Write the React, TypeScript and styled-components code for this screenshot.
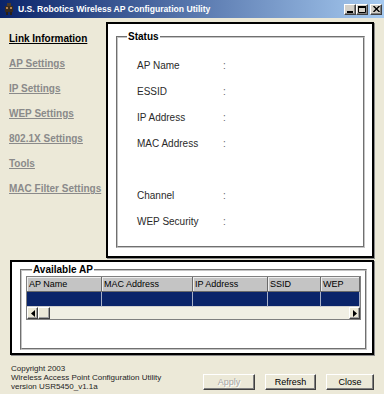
import styled, { createGlobalStyle } from 'styled-components';

const GlobalStyle = createGlobalStyle`
  html, body {
    margin: 0;
    padding: 0;
    background: #ece9d8;
  }
  body {
    font-family: "Liberation Sans", Arial, sans-serif;
  }
`;

const StyledWindow = styled.div`
  width: 384px;
  height: 394px;
  display: flex;
  flex-direction: column;
  background: #ece9d8;
  overflow: hidden;
`;
const StyledTitleBar = styled.div`
  height: 18px;
  flex-shrink: 0;
  display: flex;
  align-items: center;
  padding: 0 2px 0 4px;
  background: linear-gradient(to right, #0a246a, #a6caf0);
`;
const StyledTitleText = styled.div`
  flex: 1;
  margin-left: 4px;
  color: #fff;
  font-weight: bold;
  font-size: 8.6px;
  white-space: nowrap;
`;
const StyledTitleButtons = styled.div`
  display: flex;
`;
const StyledTitleButton = styled.div<{ $gap?: boolean }>`
  width: 12px;
  height: 11px;
  box-sizing: border-box;
  margin-left: ${(p) => (p.$gap ? '2px' : '0')};
  background: #d4d0c8;
  border: 1px solid;
  border-color: #fff #404040 #404040 #fff;
  box-shadow: inset -1px -1px 0 #808080;
  display: flex;
  align-items: center;
  justify-content: center;
`;
const StyledBody = styled.div`
  flex: 1;
  display: flex;
  flex-direction: column;
  padding-top: 4px;
`;
const StyledTopRow = styled.div`
  display: flex;
  height: 236px;
`;
const StyledNav = styled.nav`
  width: 106px;
  box-sizing: border-box;
  padding: 11px 0 0 9px;
  display: flex;
  flex-direction: column;
  gap: 13px;
`;
const StyledNavLink = styled.a<{ $active?: boolean }>`
  font-weight: bold;
  font-size: 10px;
  line-height: 12px;
  color: ${(p) => (p.$active ? '#000' : '#8a8a8a')};
  text-decoration: underline;
  white-space: nowrap;
  cursor: pointer;
`;
const StyledPanel = styled.div`
  background: #fff;
  box-sizing: border-box;
  border: 2px solid #000;
  box-shadow: 1px 1px 0 #8a8a8a;
  display: flex;
  flex-direction: column;
`;
const StyledMainPanel = styled(StyledPanel)`
  width: 268px;
  height: 236px;
  padding: 7px 7px 8px 8px;
`;
const StyledGroup = styled.fieldset`
  flex: 1;
  min-width: 0;
  margin: 0;
  padding: 0;
  border: 2px groove #c4c4c4;
  display: flex;
  flex-direction: column;
`;
const StyledLegend = styled.legend<{ $offset: number }>`
  margin-left: ${(p) => p.$offset}px;
  padding: 0 1px;
  font-weight: bold;
  font-size: 10px;
  line-height: 12px;
  color: #000;
`;
const StyledStatusList = styled.div`
  padding: 9px 0 0 19px;
`;
const StyledStatusRow = styled.div<{ $gap?: boolean }>`
  display: grid;
  grid-template-columns: 86px auto;
  align-items: center;
  height: 26px;
  margin-top: ${(p) => (p.$gap ? '26px' : '0')};
  font-size: 10px;
  color: #2a2a2a;
`;
const StyledColon = styled.span`
  color: #666;
`;
const StyledBottomPanel = styled(StyledPanel)`
  margin: 2px 0 0 10px;
  width: 364px;
  height: 95px;
  padding: 2px 5px 3px 8px;
`;
const StyledListView = styled.div`
  flex: 1;
  margin: 0 4px 1px 4px;
  border: 1px solid #808080;
  display: flex;
  flex-direction: column;
  background: #fff;
`;
const StyledGridRow = styled.div`
  display: grid;
  grid-template-columns: 75px 91px 75px 53px 39px;
  height: 15px;
`;
const StyledHeaderCell = styled.div`
  box-sizing: border-box;
  background: #c4c4c4;
  border-right: 1px solid #6a6a6a;
  border-bottom: 1px solid #6a6a6a;
  box-shadow: inset 1px 1px 0 #eeeeee;
  font-size: 9px;
  line-height: 14px;
  padding-left: 2px;
  color: #000;
  white-space: nowrap;
  overflow: hidden;
`;
const StyledSelectedCell = styled.div`
  box-sizing: border-box;
  background: #0a246a;
  border-right: 1px solid #a8b0c8;
  border-bottom: 1px solid #d0d0d0;
`;
const StyledListSpace = styled.div`
  flex: 1;
`;
const StyledScrollBar = styled.div`
  height: 12px;
  display: flex;
  background: #f1efe4;
`;
const StyledScrollButton = styled.div<{ $width?: number }>`
  width: ${(p) => p.$width || 11}px;
  box-sizing: border-box;
  background: #ece9d8;
  border: 1px solid;
  border-color: #fff #404040 #404040 #fff;
  box-shadow: inset -1px -1px 0 #a0a0a0;
  display: flex;
  align-items: center;
  justify-content: center;
`;
const StyledScrollTrack = styled.div`
  flex: 1;
`;
const StyledFooter = styled.div`
  flex: 1;
  display: flex;
  justify-content: space-between;
  padding: 0 10px 0 11px;
`;
const StyledCopyright = styled.div`
  padding-top: 9px;
  font-size: 8px;
  line-height: 9px;
  color: #1e1e1e;
`;
const StyledButtons = styled.div`
  display: flex;
  gap: 10px;
  padding-top: 19px;
`;
const StyledButton = styled.button<{ $width: number }>`
  width: ${(p) => p.$width}px;
  height: 16px;
  padding: 0;
  box-sizing: border-box;
  background: #ece9d8;
  border: 1px solid;
  border-color: #fff #404040 #404040 #fff;
  box-shadow: inset -1px -1px 0 #808080;
  font-family: "Liberation Sans", Arial, sans-serif;
  font-size: 9px;
  color: #000;
  &:disabled {
    color: #a6a6a6;
    text-shadow: 1px 1px 0 #fff;
  }
`;

const navItems = [
  'Link Information',
  'AP Settings',
  'IP Settings',
  'WEP Settings',
  '802.1X Settings',
  'Tools',
  'MAC Filter Settings',
];

const statusItems = [
  { label: 'AP Name' },
  { label: 'ESSID' },
  { label: 'IP Address' },
  { label: 'MAC Address' },
  { label: 'Channel', gap: true },
  { label: 'WEP Security' },
];

const columns = ['AP Name', 'MAC Address', 'IP Address', 'SSID', 'WEP'];

const AppIcon = () => (
  <svg width="10" height="12" viewBox="0 0 10 12">
    <rect x="3" y="0" width="4" height="3" fill="#4a3a2a" />
    <rect x="1" y="3" width="8" height="6" fill="#3a2c1e" />
    <rect x="2" y="4" width="2" height="2" fill="#b08050" />
    <rect x="6" y="4" width="2" height="2" fill="#b08050" />
    <rect x="2" y="9" width="2" height="3" fill="#2a2016" />
    <rect x="6" y="9" width="2" height="3" fill="#2a2016" />
  </svg>
);

const Arrow = ({ dir }: { dir: 'left' | 'right' }) => (
  <svg width="4" height="7" viewBox="0 0 4 7">
    <path d={dir === 'left' ? 'M4 0 L0 3.5 L4 7 Z' : 'M0 0 L4 3.5 L0 7 Z'} fill="#000" />
  </svg>
);

const App = () => {
  return (
    <StyledWindow>
      <GlobalStyle />
      <StyledTitleBar>
        <AppIcon />
        <StyledTitleText>U.S. Robotics Wireless AP Configuration Utility</StyledTitleText>
        <StyledTitleButtons>
          <StyledTitleButton>
            <svg width="6" height="7" viewBox="0 0 6 7">
              <rect x="0" y="5" width="6" height="2" fill="#000" />
            </svg>
          </StyledTitleButton>
          <StyledTitleButton>
            <svg width="8" height="7" viewBox="0 0 8 7">
              <path d="M0.5 1.5 H7.5 V6.5 H0.5 Z" fill="none" stroke="#000" />
              <rect x="0" y="0" width="8" height="2" fill="#000" />
            </svg>
          </StyledTitleButton>
          <StyledTitleButton $gap>
            <svg width="7" height="6" viewBox="0 0 7 6">
              <path d="M0.5 0 L6.5 6 M6.5 0 L0.5 6" stroke="#000" strokeWidth="1.4" />
            </svg>
          </StyledTitleButton>
        </StyledTitleButtons>
      </StyledTitleBar>

      <StyledBody>
        <StyledTopRow>
          <StyledNav>
            {navItems.map((item, i) => (
              <StyledNavLink key={item} $active={i === 0}>{item}</StyledNavLink>
            ))}
          </StyledNav>
          <StyledMainPanel>
            <StyledGroup>
              <StyledLegend $offset={9}>Status</StyledLegend>
              <StyledStatusList>
                {statusItems.map((s) => (
                  <StyledStatusRow key={s.label} $gap={s.gap}>
                    <span>{s.label}</span>
                    <StyledColon>:</StyledColon>
                  </StyledStatusRow>
                ))}
              </StyledStatusList>
            </StyledGroup>
          </StyledMainPanel>
        </StyledTopRow>

        <StyledBottomPanel>
          <StyledGroup>
            <StyledLegend $offset={10}>Available AP</StyledLegend>
            <StyledListView>
              <StyledGridRow>
                {columns.map((c) => (
                  <StyledHeaderCell key={c}>{c}</StyledHeaderCell>
                ))}
              </StyledGridRow>
              <StyledGridRow>
                {columns.map((c) => (
                  <StyledSelectedCell key={c} />
                ))}
              </StyledGridRow>
              <StyledListSpace />
              <StyledScrollBar>
                <StyledScrollButton><Arrow dir="left" /></StyledScrollButton>
                <StyledScrollButton $width={12} />
                <StyledScrollTrack />
                <StyledScrollButton><Arrow dir="right" /></StyledScrollButton>
              </StyledScrollBar>
            </StyledListView>
          </StyledGroup>
        </StyledBottomPanel>

        <StyledFooter>
          <StyledCopyright>
            <div>Copyright 2003</div>
            <div>Wireless Access Point Configuration Utility</div>
            <div>version USR5450_v1.1a</div>
          </StyledCopyright>
          <StyledButtons>
            <StyledButton $width={52} disabled>Apply</StyledButton>
            <StyledButton $width={51}>Refresh</StyledButton>
            <StyledButton $width={48}>Close</StyledButton>
          </StyledButtons>
        </StyledFooter>
      </StyledBody>
    </StyledWindow>
  );
};

export default App;
